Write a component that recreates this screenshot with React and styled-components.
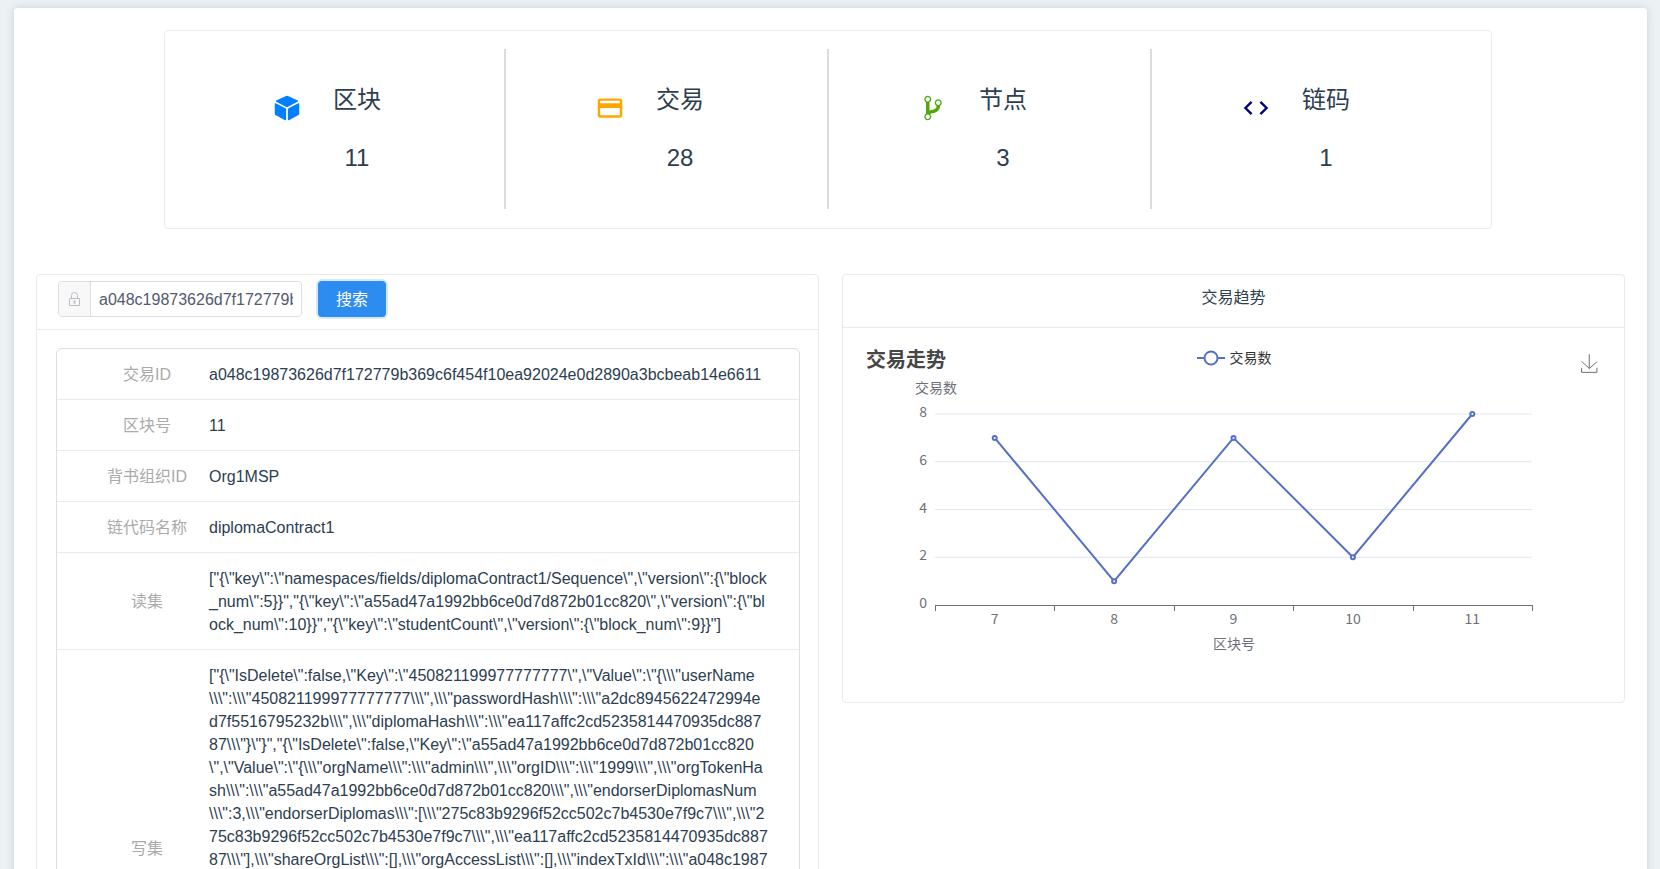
import * as React from "react";
import { useState } from "react";
import { createGlobalStyle, styled } from "styled-components";
import { IoMdCard, IoMdCode, IoMdCube, IoMdGitBranch } from "react-icons/io";

const GlobalStyle = createGlobalStyle`
  * {
    box-sizing: border-box;
  }

  html {
    scrollbar-width: none;
  }

  body {
    margin: 0;
    background: #ecf1f4;
    color: #2c3e50;
    font: 16px/23px "Liberation Sans", "Noto Sans CJK SC", sans-serif;
  }
`;

const Page = styled.main`
  margin: 8px 13px 8px 14px;
  padding: 22px;
  border-radius: 4px;
  background: #fff;
  box-shadow: 0 0 8px rgba(60, 80, 110, 0.2);
`;

const Card = styled.section`
  min-width: 0;
  border: 1px solid #e8eaec;
  border-radius: 4px;
  background: #fff;
`;

const StatsCard = styled(Card)`
  display: grid;
  grid-template-columns: repeat(4, 1fr);
  margin: 0 133px 45px 128px;
  padding: 18px 16px 19px 18px;
`;

const StatColumn = styled.div`
  display: flex;
  gap: 32px;
  height: 160px;
  padding-left: 90px;
  border-right: 2px solid #dcdcdc;

  &:last-child {
    border-right: 0;
  }
`;

const StatIcon = styled.span`
  display: flex;
  margin-top: 45px;
  color: ${(props) => props.$color};
  font-size: 28px;
`;

const StatText = styled.div`
  padding-top: 22px;
  font-size: 24px;
  line-height: 58px;
  text-align: center;
`;

const Panels = styled.div`
  display: grid;
  grid-template-columns: 1fr 1fr;
  align-items: start;
  gap: 23px;
`;

const SearchBar = styled.form`
  display: flex;
  align-items: center;
  gap: 16px;
  padding: 6px 21px 12px;
  border-bottom: 1px solid #e8eaec;
`;

const InputGroup = styled.div`
  display: flex;
  width: 244px;
  height: 36px;
  border: 1px solid #dcdee2;
  border-radius: 4px;
  overflow: hidden;
`;

const InputAddon = styled.label`
  display: flex;
  align-items: center;
  justify-content: center;
  flex: none;
  width: 32px;
  border-right: 1px solid #dcdee2;
  background: #f8f8f9;
`;

const TextInput = styled.input`
  flex: 1;
  min-width: 0;
  padding: 0 8px;
  border: 0;
  outline: 0;
  background: #fff;
  color: #515a6e;
  font: inherit;
`;

const SearchButton = styled.button`
  height: 36px;
  padding: 0 18px;
  border: 0;
  border-radius: 4px;
  background: #2d8cf0;
  box-shadow: 0 0 0 2px rgba(45, 140, 240, 0.2);
  color: #fff;
  font: inherit;
  cursor: pointer;
`;

const DetailBox = styled.div`
  margin: 18px 18px 18px 19px;
  border: 1px solid #dcdee2;
  border-radius: 6px;
`;

const DetailTable = styled.table`
  width: 100%;
  border-collapse: collapse;
  table-layout: fixed;

  tr + tr {
    border-top: 1px solid #e8eaec;
  }
`;

const LabelCell = styled.th`
  width: 152px;
  padding: 14px 0 13px 28px;
  color: #aaa;
  font-weight: 400;
`;

const ValueCell = styled.td`
  padding: 14px 24px 13px 0;
  white-space: pre-line;
  word-break: break-all;
`;

const ChartTitle = styled.div`
  padding: 11px 0 18px;
  border-bottom: 1px solid #e8eaec;
  text-align: center;
`;

const ChartHead = styled.div`
  display: grid;
  grid-template-columns: 1fr auto 1fr;
  align-items: center;
  height: 50px;
  padding: 14px 26px 0 23px;

  h2 {
    margin: 0;
    color: #464646;
    font-size: 20px;
  }
`;

const Legend = styled.span`
  display: flex;
  align-items: center;
  gap: 5px;
  padding: 0 0 4px 4px;
  color: #333;
  font-size: 14px;
`;

const DownloadButton = styled.button`
  display: flex;
  justify-self: end;
  padding: 6px 0 0;
  border: 0;
  background: none;
  cursor: pointer;
`;

const Plot = styled.svg`
  display: block;
  width: 100%;
  font-family: "Noto Sans CJK SC", sans-serif;
  font-size: 14px;
  fill: #6e7079;
`;

const TX_ID = "a048c19873626d7f172779b369c6f454f10ea92024e0d2890a3bcbeab14e6611";

const stats = [
  { name: "区块", value: 11, icon: IoMdCube, color: "#0080ff" },
  { name: "交易", value: 28, icon: IoMdCard, color: "#ffa500" },
  { name: "节点", value: 3, icon: IoMdGitBranch, color: "#50a80c" },
  { name: "链码", value: 1, icon: IoMdCode, color: "#000080" },
];

const readSet = String.raw`["{\"key\":\"namespaces/fields/diplomaContract1/Sequence\",\"version\":{\"block
_num\":5}}","{\"key\":\"a55ad47a1992bb6ce0d7d872b01cc820\",\"version\":{\"bl
ock_num\":10}}","{\"key\":\"studentCount\",\"version\":{\"block_num\":9}}"]`;

const writeSet = String.raw`["{\"IsDelete\":false,\"Key\":\"450821199977777777\",\"Value\":\"{\\\"userName
\\\":\\\"450821199977777777\\\",\\\"passwordHash\\\":\\\"a2dc8945622472994e
d7f5516795232b\\\",\\\"diplomaHash\\\":\\\"ea117affc2cd5235814470935dc887
87\\\"}\"}","{\"IsDelete\":false,\"Key\":\"a55ad47a1992bb6ce0d7d872b01cc820
\",\"Value\":\"{\\\"orgName\\\":\\\"admin\\\",\\\"orgID\\\":\\\"1999\\\",\\\"orgTokenHa
sh\\\":\\\"a55ad47a1992bb6ce0d7d872b01cc820\\\",\\\"endorserDiplomasNum
\\\":3,\\\"endorserDiplomas\\\":[\\\"275c83b9296f52cc502c7b4530e7f9c7\\\",\\\"2
75c83b9296f52cc502c7b4530e7f9c7\\\",\\\"ea117affc2cd5235814470935dc887
87\\\"],\\\"shareOrgList\\\":[],\\\"orgAccessList\\\":[],\\\"indexTxId\\\":\\\"a048c1987
3626d7f172779b369c6f454f10ea92024e0d2890a3bcbeab14e6611\\\"}\"}",
"{\"IsDelete\":false,\"Key\":\"ea117affc2cd5235814470935dc88787\",
\"Value\":\"{\\\"diplomaHash\\\":\\\"ea117affc2cd5235814470935dc88787\\\",
\\\"orgID\\\":\\\"1999\\\",\\\"orgName\\\":\\\"admin\\\",\\\"indexTxId\\\":
\\\"a048c19873626d7f172779b369c6f454f10ea92024e0d2890a3bcbea
b14e6611\\\"}\"}",
"{\"IsDelete\":false,\"Key\":\"studentCount\",\"Value\":\"3\"}"]`;

const details = [
  { label: "交易ID", value: TX_ID },
  { label: "区块号", value: "11" },
  { label: "背书组织ID", value: "Org1MSP" },
  { label: "链代码名称", value: "diplomaContract1" },
  { label: "读集", value: readSet },
  { label: "写集", value: writeSet },
];

const trend = [
  { block: 7, count: 7 },
  { block: 8, count: 1 },
  { block: 9, count: 7 },
  { block: 10, count: 2 },
  { block: 11, count: 8 },
];

function Stat({ name, value, icon: Icon, color }) {
  return (
    <StatColumn>
      <StatIcon $color={color}>
        <Icon />
      </StatIcon>
      <StatText>
        <div>{name}</div>
        <div>{value}</div>
      </StatText>
    </StatColumn>
  );
}

function LockIcon() {
  return (
    <svg width="12" height="16" fill="none" stroke="#b9bdc5">
      <path d="M.5 7.5h10v7H.5zM2.5 7.5V4.5a3 3 0 0 1 6 0V7.5" />
      <rect x="5" y="10" width="1" height="2" />
    </svg>
  );
}

function Search() {
  const [query, setQuery] = useState(TX_ID);
  return (
    <SearchBar onSubmit={(e) => e.preventDefault()}>
      <InputGroup>
        <InputAddon htmlFor="tx-id" aria-label="交易ID">
          <LockIcon />
        </InputAddon>
        <TextInput
          id="tx-id"
          value={query}
          onChange={(e) => setQuery(e.target.value)}
        />
      </InputGroup>
      <SearchButton>搜索</SearchButton>
    </SearchBar>
  );
}

function Details() {
  return (
    <DetailBox>
      <DetailTable>
        <tbody>
          {details.map(({ label, value }) => (
            <tr key={label}>
              <LabelCell scope="row">{label}</LabelCell>
              <ValueCell>{value}</ValueCell>
            </tr>
          ))}
        </tbody>
      </DetailTable>
    </DetailBox>
  );
}

const LEFT = 92;
const RIGHT = 689;
const TOP = 36;
const BOTTOM = 227;
const STEP = (RIGHT - LEFT) / trend.length;

const xAt = (index) => LEFT + STEP * (index + 0.5);
const yAt = (count) => BOTTOM - ((BOTTOM - TOP) * count) / 8;

function TrendPlot() {
  const points = trend.map(({ count }, i) => `${xAt(i)},${yAt(count)}`);
  return (
    <Plot viewBox="0 0 781 324">
      <text x="93" y="15" textAnchor="middle">
        交易数
      </text>
      {[0, 2, 4, 6, 8].map((n) => (
        <g key={n}>
          {n > 0 && (
            <path d={`M${LEFT} ${yAt(n)}H${RIGHT}`} stroke="#e0e6f1" />
          )}
          <text x="84" y={yAt(n) + 3} textAnchor="end">
            {n}
          </text>
        </g>
      ))}
      <path d={`M${LEFT} ${BOTTOM + 0.5}H${RIGHT}`} stroke="#6e7079" />
      {[0, 1, 2, 3, 4, 5].map((n) => (
        <path
          key={n}
          d={`M${Math.round(LEFT + STEP * n) + 0.5} ${BOTTOM}v6`}
          stroke="#6e7079"
        />
      ))}
      {trend.map(({ block }, i) => (
        <text key={block} x={xAt(i)} y="246" textAnchor="middle">
          {block}
        </text>
      ))}
      <text x="391" y="271" textAnchor="middle">
        区块号
      </text>
      <g stroke="#5470c6" strokeWidth="2">
        <polyline points={points.join(" ")} fill="none" />
        {trend.map(({ block, count }, i) => (
          <circle key={block} cx={xAt(i)} cy={yAt(count)} r="2" fill="#fff" />
        ))}
      </g>
    </Plot>
  );
}

function TrendCard() {
  return (
    <Card>
      <ChartTitle>交易趋势</ChartTitle>
      <ChartHead>
        <h2>交易走势</h2>
        <Legend>
          <svg width="28" height="16" stroke="#5470c6" strokeWidth="2">
            <path d="M0 8h28" />
            <circle cx="14" cy="8" r="6.5" fill="#fff" />
          </svg>
          交易数
        </Legend>
        <DownloadButton aria-label="下载">
          <svg width="17" height="19" viewBox="3 -1 54 61" fill="none">
            <path
              d="M4.7 22.9L29.3 45.5L54.7 23.4M4.6 43.6V58H53.8V43.6M29.2 45.1V0"
              stroke="#666"
              strokeWidth="3"
            />
          </svg>
        </DownloadButton>
      </ChartHead>
      <TrendPlot />
    </Card>
  );
}

export default function App() {
  return (
    <>
      <GlobalStyle />
      <Page>
        <StatsCard>
          {stats.map((stat) => (
            <Stat key={stat.name} {...stat} />
          ))}
        </StatsCard>
        <Panels>
          <Card>
            <Search />
            <Details />
          </Card>
          <TrendCard />
        </Panels>
      </Page>
    </>
  );
}
